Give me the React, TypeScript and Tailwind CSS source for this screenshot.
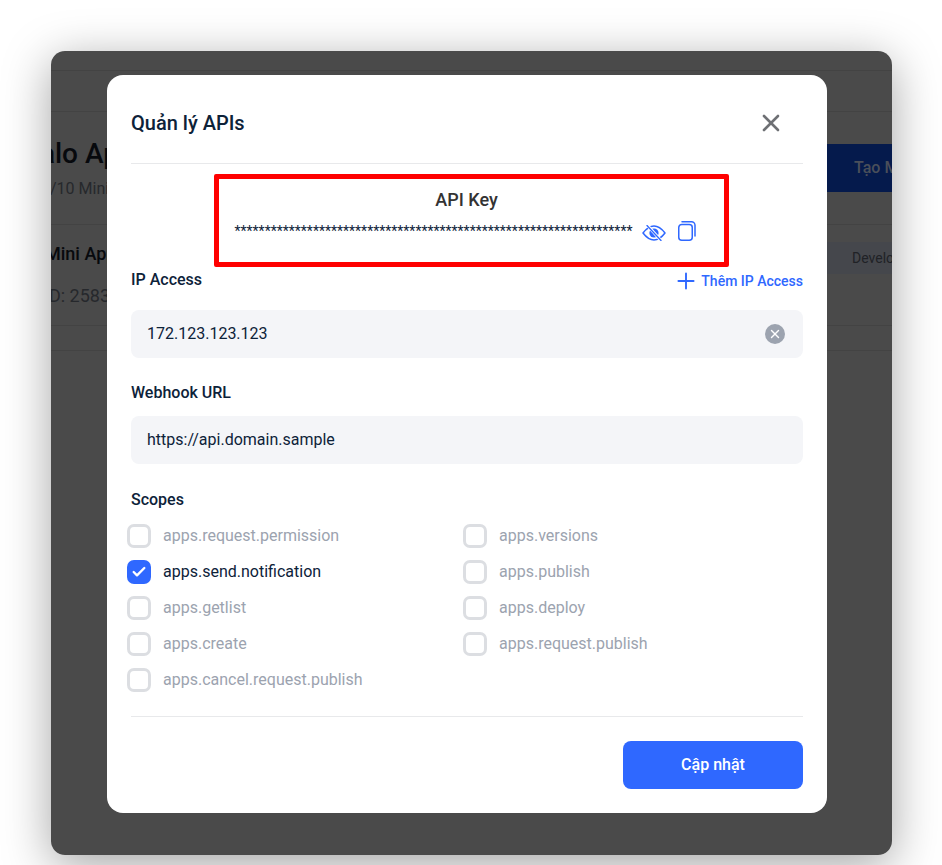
import { X, Plus, Check } from 'lucide-react';

const leftScopes = [
  { name: 'apps.request.permission', checked: false },
  { name: 'apps.send.notification', checked: true },
  { name: 'apps.getlist', checked: false },
  { name: 'apps.create', checked: false },
  { name: 'apps.cancel.request.publish', checked: false },
];

const rightScopes = [
  { name: 'apps.versions', checked: false },
  { name: 'apps.publish', checked: false },
  { name: 'apps.deploy', checked: false },
  { name: 'apps.request.publish', checked: false },
];

function Scope({ name, checked }: { name: string; checked: boolean }) {
  return (
    <div className="flex h-9 items-center gap-[12px]">
      {checked ? (
        <span className="flex h-6 w-6 items-center justify-center rounded-[7px] bg-[#2f68ff]">
          <Check className="h-4 w-4 text-white" strokeWidth={3.5} />
        </span>
      ) : (
        <span className="h-6 w-6 rounded-[7px] border-[3px] border-[#dcdee2] bg-white" />
      )}
      <span className={checked ? 'text-[16px] text-[#0d2239]' : 'text-[16px] text-[#9ca3af]'}>{name}</span>
    </div>
  );
}

function EyeSlash() {
  return (
    <svg viewBox="0 0 24 16" className="ml-[10px] mt-[4px] h-4 w-6" fill="none">
      <path d="M1 8C5 2.8 8.5 1 12 1s7 1.8 11 7c-4 5.2-7.5 7-11 7S5 13.2 1 8Z" stroke="#2f68ff" strokeWidth="1.5" strokeLinejoin="round" />
      <circle cx="12" cy="8" r="4.6" fill="#2f68ff" />
      <path d="M5.5 0.5 19 15.5" stroke="#ffffff" strokeWidth="3" />
      <path d="M5 0.5 19 15.5" stroke="#2f68ff" strokeWidth="1.3" strokeLinecap="round" />
    </svg>
  );
}

function CopyIcon() {
  return (
    <svg viewBox="0 0 18 20" className="ml-[12px] h-5 w-[18px]" fill="none" stroke="#2f68ff" strokeWidth="1.5">
      <rect x="0.75" y="3.5" width="13.5" height="15.75" rx="3" />
      <path d="M4 0.75h9.5A3.5 3.5 0 0 1 17 4.25V15" strokeLinecap="round" />
    </svg>
  );
}

export default function App() {
  return (
    <div className="h-[865px] w-[942px] overflow-hidden bg-white pl-[51px] pt-[51px] font-['Roboto',sans-serif]">
      <div className="relative h-[804px] w-[841px] rounded-[14px] shadow-[0_10px_48px_rgba(0,0,0,0.36)]">
        {/* Trang phía sau lớp phủ */}
        <div className="h-full w-full overflow-hidden rounded-[14px] bg-[#4a4a4a]">
          <div className="h-[20px] border-b border-[#434343]" />
          <div className="h-[41px] border-b border-[#434343]" />
          <div className="flex h-[113px] items-start justify-between border-b border-[#434343] pt-[24px]">
            <div className="-ml-[28px]">
              <p className="text-[28px] font-medium leading-[36px] text-[#07090d]">Zalo Apps</p>
              <p className="ml-[18px] mt-[5px] text-[16px] text-[#26282c]">0/10 Mini Apps</p>
            </div>
            <div className="-mr-[135px] mt-[8px] flex h-[48px] w-[300px] items-center rounded-lg bg-[#051a4c] pl-[127px] text-[16px] font-medium text-[#4a4f5a]">
              Tạo Mini App
            </div>
          </div>
          <div className="flex h-[101px] items-start justify-between border-b border-[#434343] pt-[17px]">
            <div className="-ml-[6px]">
              <p className="text-[18px] font-medium leading-[24px] text-[#07090d]">Mini App</p>
              <p className="-ml-[1px] mt-[18px] text-[18px] leading-[24px] text-[#26282c]">ID: 2583</p>
            </div>
            <div className="-mr-[70px] flex h-[32px] w-[200px] items-center rounded-lg bg-[#45474c] pl-[90px] text-[14px] text-[#202226]">
              Development
            </div>
          </div>
          <div className="h-[25px] border-b border-[#434343]" />
        </div>

        {/* Modal */}
        <div className="absolute left-[56px] top-[24px] h-[738px] w-[720px] rounded-2xl bg-white px-6">
          <div className="flex h-[89px] items-center justify-between border-b border-[#e8e9eb] pt-2">
            <h2 className="text-[20px] font-medium text-[#0d2239]">Quản lý APIs</h2>
            <X className="mr-[18px] h-7 w-7 text-[#6e7074]" strokeWidth={2.25} />
          </div>

          <div className="flex h-[104px] flex-col items-center pt-[10px]">
            <div className="ml-[8px] box-border h-[93px] w-[515px] rounded-[2px] border-[5px] border-[#ff0000] px-[16px] pt-[6px]">
              <p className="pr-[9px] text-center text-[18px] font-medium leading-[30px] text-[#333333]">API Key</p>
              <div className="mt-[4px] flex items-center">
                <span className="text-[14px] leading-[24px] text-[#0d2239]">
                  ******************************************************************
                </span>
                <EyeSlash />
                <CopyIcon />
              </div>
            </div>
          </div>

          <div className="mt-[1px] flex h-[24px] items-center justify-between">
            <span className="mb-[2px] text-[16px] font-medium text-[#0d2239]">IP Access</span>
            <span className="flex items-center gap-[2px] text-[14px] font-medium text-[#2f68ff]">
              <Plus className="h-[26px] w-[26px]" strokeWidth={1.75} /> Thêm IP Access
            </span>
          </div>
          <div className="mt-[17px] flex h-[48px] items-center justify-between rounded-lg bg-[#f4f5f8] px-4 text-[16px] text-[#0d2239]">
            172.123.123.123
            <span className="mr-[2px] flex h-5 w-5 items-center justify-center rounded-full bg-[#9ca3af]">
              <X className="h-3.5 w-3.5 text-white" strokeWidth={2.5} />
            </span>
          </div>

          <p className="mt-[23px] text-[16px] font-medium leading-[24px] text-[#0d2239]">Webhook URL</p>
          <div className="mt-[11px] flex h-[48px] items-center rounded-lg bg-[#f4f5f8] px-4 text-[16px] text-[#0d2239]">
            https://api.domain.sample
          </div>

          <p className="mt-[24px] text-[16px] font-medium leading-[24px] text-[#0d2239]">Scopes</p>
          <div className="-ml-[4px] mt-[6px] grid grid-cols-[336px_1fr]">
            <div className="flex flex-col">
              {leftScopes.map(s => <Scope key={s.name} {...s} />)}
            </div>
            <div className="flex flex-col">
              {rightScopes.map(s => <Scope key={s.name} {...s} />)}
            </div>
          </div>

          <div className="mt-[18px] border-t border-[#e8e9eb]" />
          <div className="mt-[24px] flex justify-end">
            <button className="h-[48px] w-[180px] rounded-lg bg-[#2f68ff] text-[16px] font-medium text-white">
              Cập nhật
            </button>
          </div>
        </div>
      </div>
    </div>
  );
}
